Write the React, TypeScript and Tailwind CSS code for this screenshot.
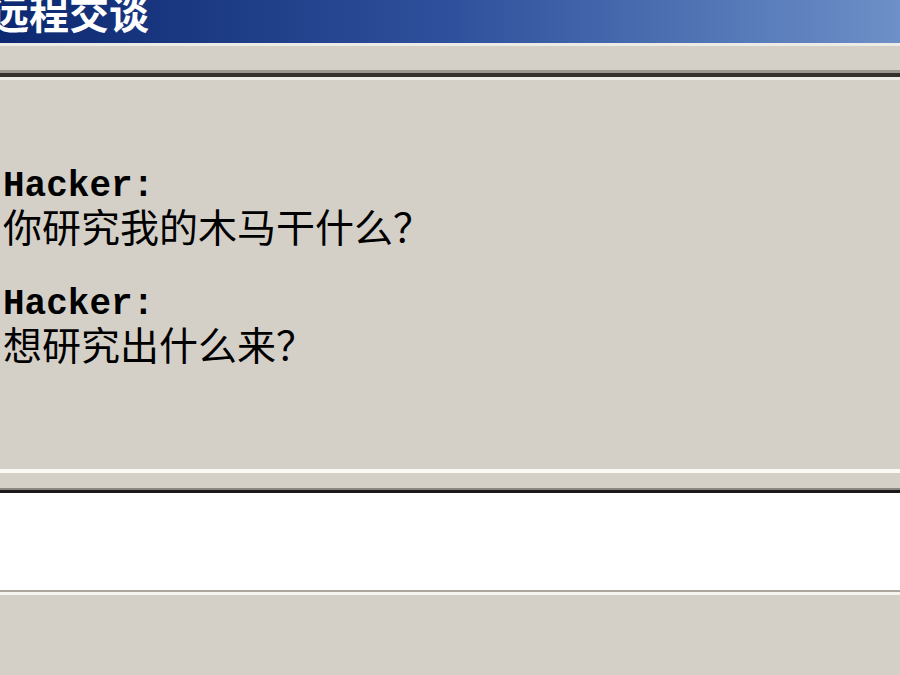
const cjk = '"Noto Sans CJK SC", "Noto Sans CJK TC", sans-serif';

const messages = [
  { from: 'Hacker:', text: '你研究我的木马干什么？' },
  { from: 'Hacker:', text: '想研究出什么来？' },
];

export default function App() {
  return (
    <div className="w-[900px] h-[675px] bg-[#d4d0c8] overflow-hidden flex flex-col">
      {/* title bar */}
      <div className="h-[43px] shrink-0 overflow-hidden bg-gradient-to-r from-[#0c2870] via-[#2f509c] to-[#6d90c8]">
        <div
          className="-mt-[8px] -ml-[11px] text-[40px] leading-none font-bold text-white whitespace-nowrap"
          style={{ fontFamily: cjk }}
        >
          远程交谈
        </div>
      </div>
      <div className="h-[3px] shrink-0 bg-[#ecebe6]" />
      <div className="h-[24px] shrink-0" />

      {/* chat log, sunken */}
      <div className="h-[3px] shrink-0 bg-[#9c988f]" />
      <div className="h-[4px] shrink-0 bg-[#34312c]" />
      <div className="h-[3px] shrink-0 bg-[#eeece6]" />
      <div className="h-[389px] shrink-0 pt-[87px] pl-[3px] text-black">
        {messages.map((m, i) => (
          <div key={i} className={i > 0 ? 'mt-[40px]' : ''}>
            <div
              className="text-[36px] leading-[39px] font-bold"
              style={{ fontFamily: '"Liberation Mono", monospace' }}
            >
              {m.from}
            </div>
            <div className="text-[39px] leading-[39px]" style={{ fontFamily: cjk }}>
              {m.text}
            </div>
          </div>
        ))}
      </div>
      <div className="h-[4px] shrink-0 bg-[#fbfaf5]" />
      <div className="h-[15px] shrink-0" />

      {/* input box */}
      <div className="h-[2px] shrink-0 bg-[#8a8780]" />
      <div className="h-[3px] shrink-0 bg-[#1a1a1a]" />
      <div className="h-[97px] shrink-0 bg-white" />
      <div className="h-[2px] shrink-0 bg-[#aaa69e]" />
      <div className="h-[3px] shrink-0 bg-[#f6f5f0]" />
      <div className="flex-1" />
    </div>
  );
}
